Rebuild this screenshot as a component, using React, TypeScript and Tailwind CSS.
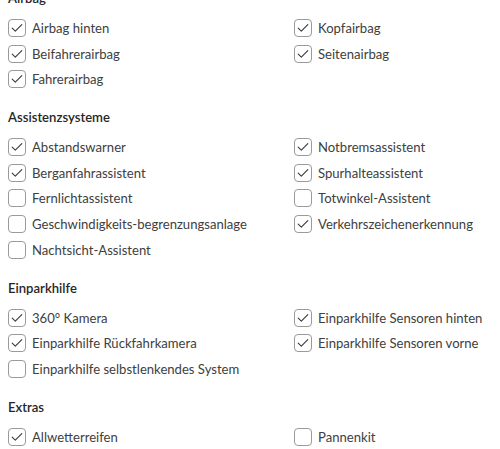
type Item = { label: string; checked: boolean }

const sections: { title: string; items: Item[] }[] = [
  {
    title: 'Airbag',
    items: [
      { label: 'Airbag hinten', checked: true },
      { label: 'Kopfairbag', checked: true },
      { label: 'Beifahrerairbag', checked: true },
      { label: 'Seitenairbag', checked: true },
      { label: 'Fahrerairbag', checked: true }
    ]
  },
  {
    title: 'Assistenzsysteme',
    items: [
      { label: 'Abstandswarner', checked: true },
      { label: 'Notbremsassistent', checked: true },
      { label: 'Berganfahrassistent', checked: true },
      { label: 'Spurhalteassistent', checked: true },
      { label: 'Fernlichtassistent', checked: false },
      { label: 'Totwinkel-Assistent', checked: false },
      { label: 'Geschwindigkeits-begrenzungsanlage', checked: false },
      { label: 'Verkehrszeichenerkennung', checked: true },
      { label: 'Nachtsicht-Assistent', checked: false }
    ]
  },
  {
    title: 'Einparkhilfe',
    items: [
      { label: '360° Kamera', checked: true },
      { label: 'Einparkhilfe Sensoren hinten', checked: true },
      { label: 'Einparkhilfe Rückfahrkamera', checked: true },
      { label: 'Einparkhilfe Sensoren vorne', checked: true },
      { label: 'Einparkhilfe selbstlenkendes System', checked: false }
    ]
  },
  {
    title: 'Extras',
    items: [
      { label: 'Allwetterreifen', checked: true },
      { label: 'Pannenkit', checked: false }
    ]
  }
]

function Check({ item }: { item: Item }) {
  return (
    <label className="flex items-center h-[18px] gap-[6px] whitespace-nowrap">
      <span className="flex-none w-[18px] h-[18px] rounded-[4px] border border-[#9a9a9a] bg-white flex items-center justify-center">
        {item.checked && (
          <svg width="12" height="10" viewBox="0 0 12 10" fill="none">
            <path d="M1.2 5.2 L4.3 8.2 L10.8 1.6" stroke="#3a3a3a" strokeWidth="1.1" strokeLinecap="round" strokeLinejoin="round" />
          </svg>
        )}
      </span>
      <span className="text-[13.1px] text-[#404040] leading-[18px]">{item.label}</span>
    </label>
  )
}

export default function App() {
  return (
    <div className="bg-white w-[500px] h-[449px] overflow-hidden font-['Lato',sans-serif]">
      <div className="mt-[-12px] pl-[8px] flex flex-col gap-[19px]">
        {sections.map((s) => (
          <section key={s.title}>
            <h3 className="text-[13.1px] font-semibold text-[#262626] leading-[20px] mb-[11px]">{s.title}</h3>
            <div className="grid grid-cols-[286px_1fr] gap-y-[7.6px]">
              {s.items.map((item) => (
                <Check key={item.label} item={item} />
              ))}
            </div>
          </section>
        ))}
      </div>
    </div>
  )
}
